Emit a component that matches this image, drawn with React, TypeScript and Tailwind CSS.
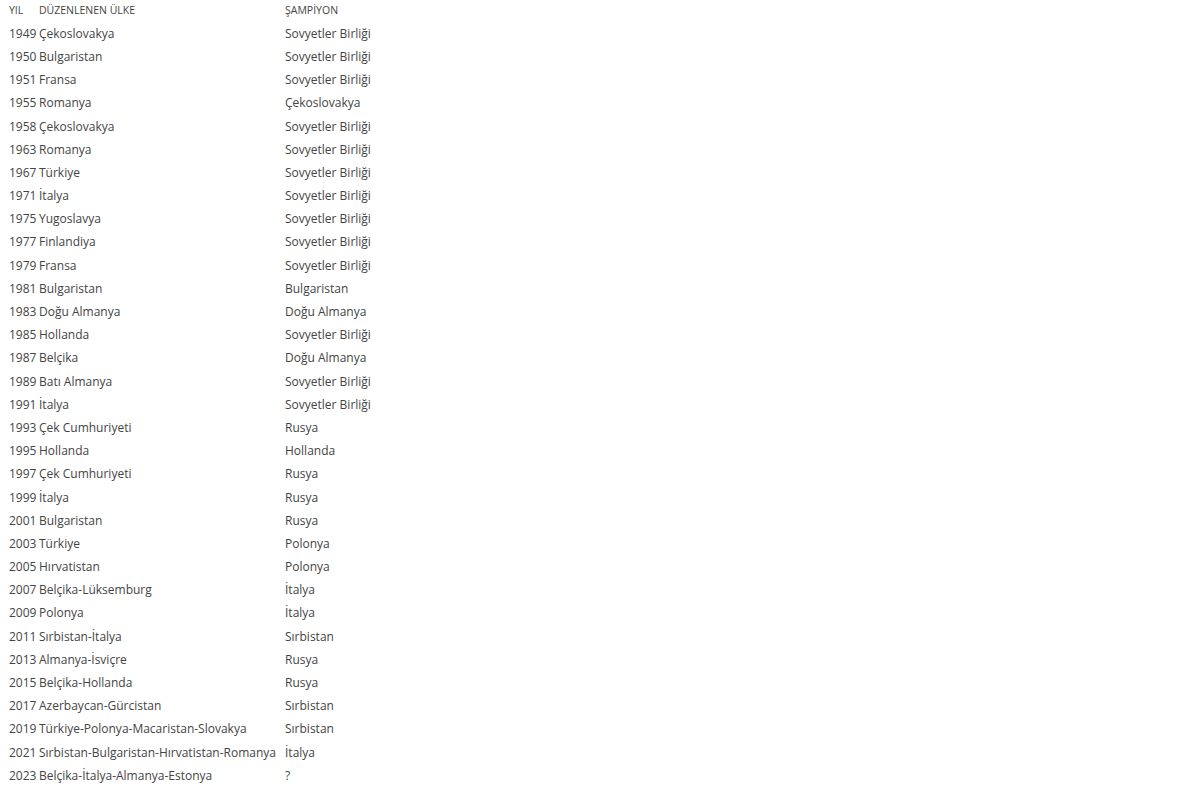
const rows: [string, string, string][] = [
  ["1949", "Çekoslovakya", "Sovyetler Birliği"],
  ["1950", "Bulgaristan", "Sovyetler Birliği"],
  ["1951", "Fransa", "Sovyetler Birliği"],
  ["1955", "Romanya", "Çekoslovakya"],
  ["1958", "Çekoslovakya", "Sovyetler Birliği"],
  ["1963", "Romanya", "Sovyetler Birliği"],
  ["1967", "Türkiye", "Sovyetler Birliği"],
  ["1971", "İtalya", "Sovyetler Birliği"],
  ["1975", "Yugoslavya", "Sovyetler Birliği"],
  ["1977", "Finlandiya", "Sovyetler Birliği"],
  ["1979", "Fransa", "Sovyetler Birliği"],
  ["1981", "Bulgaristan", "Bulgaristan"],
  ["1983", "Doğu Almanya", "Doğu Almanya"],
  ["1985", "Hollanda", "Sovyetler Birliği"],
  ["1987", "Belçika", "Doğu Almanya"],
  ["1989", "Batı Almanya", "Sovyetler Birliği"],
  ["1991", "İtalya", "Sovyetler Birliği"],
  ["1993", "Çek Cumhuriyeti", "Rusya"],
  ["1995", "Hollanda", "Hollanda"],
  ["1997", "Çek Cumhuriyeti", "Rusya"],
  ["1999", "İtalya", "Rusya"],
  ["2001", "Bulgaristan", "Rusya"],
  ["2003", "Türkiye", "Polonya"],
  ["2005", "Hırvatistan", "Polonya"],
  ["2007", "Belçika-Lüksemburg", "İtalya"],
  ["2009", "Polonya", "İtalya"],
  ["2011", "Sırbistan-İtalya", "Sırbistan"],
  ["2013", "Almanya-İsviçre", "Rusya"],
  ["2015", "Belçika-Hollanda", "Rusya"],
  ["2017", "Azerbaycan-Gürcistan", "Sırbistan"],
  ["2019", "Türkiye-Polonya-Macaristan-Slovakya", "Sırbistan"],
  ["2021", "Sırbistan-Bulgaristan-Hırvatistan-Romanya", "İtalya"],
  ["2023", "Belçika-İtalya-Almanya-Estonya", "?"],
];

export default function App() {
  return (
    <div className="min-h-screen w-full bg-white pl-[9px] font-['Open_Sans',sans-serif] text-[12px] text-[#444]">
      <table className="table-fixed border-collapse">
        <colgroup>
          <col className="w-[30px]" />
          <col className="w-[246px]" />
          <col className="w-[120px]" />
        </colgroup>
        <thead>
          <tr className="h-[22.2px] text-left align-middle text-[10.5px]">
            <th className="p-0 pb-[1px] font-normal">YIL</th>
            <th className="p-0 pb-[1px] font-normal">DÜZENLENEN ÜLKE</th>
            <th className="p-0 pb-[1px] font-normal">ŞAMPİYON</th>
          </tr>
        </thead>
        <tbody>
          {rows.map(([year, host, champ]) => (
            <tr key={year} className="h-[23.2px] align-middle">
              <td className="p-0 whitespace-nowrap">{year}</td>
              <td className="p-0 whitespace-nowrap">{host}</td>
              <td className="p-0 whitespace-nowrap">{champ}</td>
            </tr>
          ))}
        </tbody>
      </table>
    </div>
  );
}
